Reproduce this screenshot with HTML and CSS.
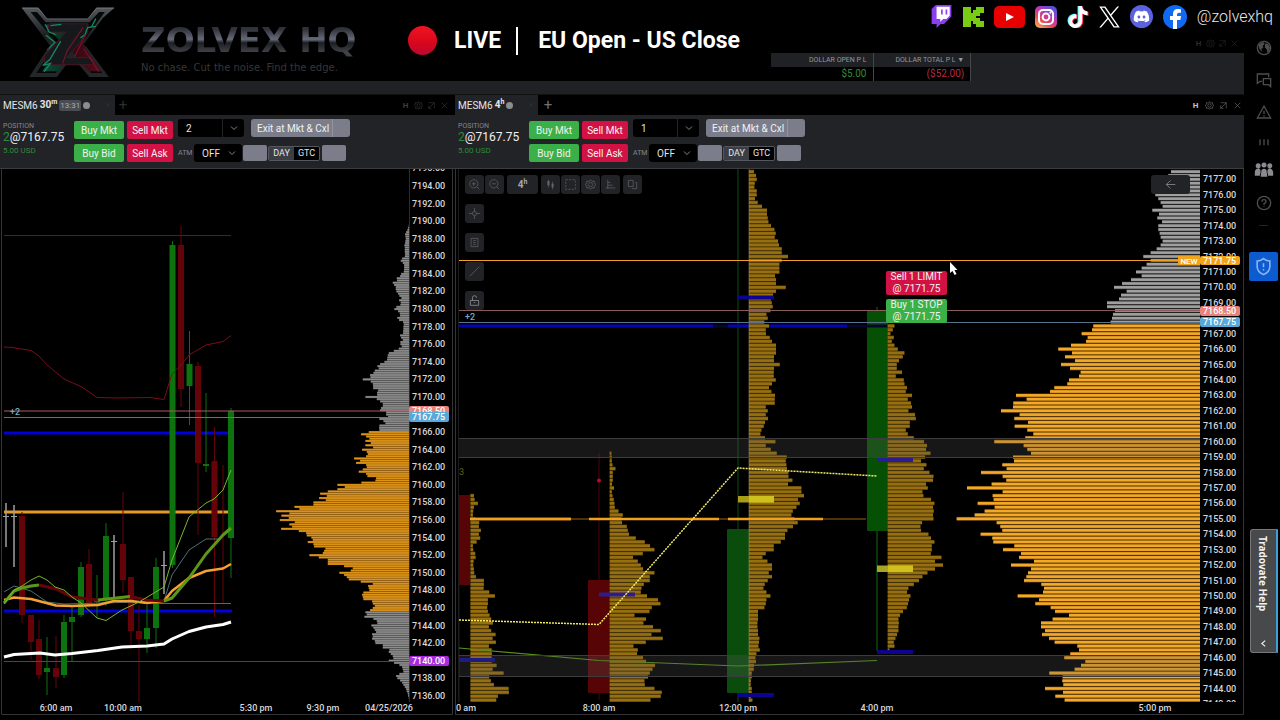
FILE: index.html
```html
<!DOCTYPE html>
<html lang="en">
  <head>
    <meta charset="utf-8" />
    <meta name="viewport" content="width=device-width, initial-scale=1" />
    <title>Zolvex HQ - Live</title>
    <link rel="stylesheet" href="styles.css">
    <script src="charts.js" defer></script>
  </head>

  <body>
    <!-- Shared icons -->
    <svg class="icon-defs" aria-hidden="true">
      <symbol id="gear" viewBox="0 0 16 16">
        <path d="M8 1l2 2.500 3.200-.6.300 3.200L16 8l-2.500 2-.3 3.200-3.200-.6L8 15l-2-2.400-3.200.6-.3-3.200L0 8l2.500-1.900.3-3.200 3.200.6z" />
        <circle cx="8" cy="8" r="3" />
      </symbol>
      <symbol id="popout" viewBox="0 0 16 16">
        <path d="M3 3h10v10M13 3 3 13M3 8v5h5" />
      </symbol>
      <symbol id="close" viewBox="0 0 16 16">
        <path d="M3 3l10 10M13 3 3 13" />
      </symbol>
      <symbol id="chevron" viewBox="0 0 16 16">
        <path d="M2 5l6 6 6-6" />
      </symbol>
    </svg>

    <div class="app">
      <main class="main">
        <header class="top">
          <div class="banner">
            <svg class="logo" viewBox="0 0 300 225" aria-hidden="true">
              <defs>
                <linearGradient id="steel" x1="0" y1="0" x2="0" y2="1">
                  <stop offset="0" stop-color="#55585b" />
                  <stop offset="0.4" stop-color="#1c2022" />
                  <stop offset="1" stop-color="#25282a" />
                </linearGradient>
                <linearGradient id="glow" x1="0" y1="0" x2="1" y2="0">
                  <stop offset="0" stop-color="#0b4f38" />
                  <stop offset="0.45" stop-color="#0a2a20" />
                  <stop offset="0.55" stop-color="#330912" />
                  <stop offset="1" stop-color="#5c0a1c" />
                </linearGradient>
                <linearGradient id="edge" x1="0" y1="0" x2="0" y2="1">
                  <stop offset="0" stop-color="#74787c" />
                  <stop offset="0.5" stop-color="#33373a" />
                  <stop offset="1" stop-color="#1c1f21" />
                </linearGradient>
              </defs>
              <path fill="url(#steel)" d="M2 4h52l27 34h128l27-34h56l-36 32-60 82 78 102h-60l-54-62-48 62H26l66-96z" />
              <path fill="#050808" d="M30 17h20l27 32h137l30-32h18l-74 100 66 91h-34l-62-70-50 70H48l62-95z" />
              <path fill="url(#glow)" d="M72 56h140l-26 42 8 20 56 84h-38l-52-60-44 60H66l62-88z" />
              <path fill="#15191b" stroke="#4b1622" stroke-width="3" d="M88 54h121v28l-66 78h72v-4l14 26H74v-28l66-74H82z" />
              <path fill="none" stroke="#168a60" stroke-width="4" d="M76 56l12 24 20 8M92 60l34-4M78 90l28 22-24 24M124 108l-34 58-22 18 24-6-20 26M234 62l-26 4-8 22-14 10M234 38l-14 26" />
              <path fill="none" stroke="#70142a" stroke-width="4" d="M194 66l-52 76M202 88l-34 68M216 158l22 40M146 134l-16 44M196 132l48 72" />
              <path fill="none" stroke="url(#edge)" stroke-width="3" d="M4 5h50l27 34h128l27-34h54M28 218l60-90M272 218l-70-92" />
            </svg>
            <div class="brand">
              <h1 class="brand-name">ZOLVEX HQ</h1>
              <p class="tagline">No chase. Cut the noise. Find the edge.</p>
            </div>
            <div class="live">
              <span class="live-dot"></span>
              <span>LIVE</span>
              <span class="live-title">EU Open - US Close</span>
            </div>
          </div>

          <div class="account">
            <div class="win-tools faint">
              <button type="button" aria-label="Hotkeys">H</button>
              <button type="button" aria-label="Settings"><svg><use href="#gear" /></svg></button>
              <button type="button" aria-label="Pop out"><svg><use href="#popout" /></svg></button>
              <button type="button" aria-label="Close"><svg><use href="#close" /></svg></button>
            </div>
            <table class="pl">
              <thead>
                <tr><th>DOLLAR OPEN P L</th><th>DOLLAR TOTAL P L ▼</th></tr>
              </thead>
              <tbody>
                <tr><td class="gain">$5.00</td><td class="loss">($52.00)</td></tr>
              </tbody>
            </table>
          </div>
        </header>

        <div class="panels">
          <section class="panel">
            <div class="tabs">
              <div class="tab">MESM6 <b>30<sup>m</sup></b> <span class="timer">13:31</span><i class="dot"></i>
                <button class="tab-close" type="button" aria-label="Close tab"><svg><use href="#close" /></svg></button>
              </div>
              <button class="add dim" type="button" aria-label="Add tab">+</button>
              <div class="win-tools dim">
                <button type="button" aria-label="Hotkeys">H</button>
                <button type="button" aria-label="Settings"><svg><use href="#gear" /></svg></button>
                <button type="button" aria-label="Pop out"><svg><use href="#popout" /></svg></button>
                <button type="button" aria-label="Close"><svg><use href="#close" /></svg></button>
              </div>
            </div>

            <form class="order-bar">
              <div class="position">
                <span class="caption">POSITION</span>
                <span class="price"><span class="gain">2</span>@7167.75</span>
                <span class="usd">5.00 USD</span>
              </div>
              <div class="trade">
                <button class="buy" type="button">Buy Mkt</button>
                <button class="sell" type="button">Sell Mkt</button>
                <button class="buy" type="button">Buy Bid</button>
                <button class="sell" type="button">Sell Ask</button>
              </div>
              <div class="options">
                <div class="row">
                  <span class="pick qty">
                    <select aria-label="Quantity"><option>2</option></select>
                    <svg><use href="#chevron" /></svg>
                  </span>
                  <button class="exit" type="button">Exit at Mkt &amp; Cxl</button>
                </div>
                <div class="row second">
                  <label class="atm" for="atm1">ATM</label>
                  <span class="pick off">
                    <select id="atm1"><option>OFF</option></select>
                    <svg><use href="#chevron" /></svg>
                  </span>
                  <button class="blank" type="button" aria-label="Order preset"></button>
                  <span class="tif">
                    <label><input type="radio" name="tif1" checked /><span>DAY</span></label>
                    <label><input type="radio" name="tif1" /><span>GTC</span></label>
                  </span>
                  <button class="blank" type="button" aria-label="Order options"></button>
                </div>
              </div>
            </form>

            <div class="chart">
              <svg id="chart30m" class="plot" viewBox="0 169 455 546" role="img" aria-label="MESM6 30 minute chart"></svg>
            </div>
          </section>

          <section class="panel">
            <div class="tabs">
              <div class="tab narrow">MESM6 <b>4<sup>h</sup></b> <i class="dot"></i>
                <button class="tab-close" type="button" aria-label="Close tab"><svg><use href="#close" /></svg></button>
              </div>
              <button class="add" type="button" aria-label="Add tab">+</button>
              <div class="win-tools">
                <button class="hot" type="button" aria-label="Hotkeys">H</button>
                <button type="button" aria-label="Settings"><svg><use href="#gear" /></svg></button>
                <button type="button" aria-label="Pop out"><svg><use href="#popout" /></svg></button>
                <button type="button" aria-label="Close"><svg><use href="#close" /></svg></button>
              </div>
            </div>

            <form class="order-bar">
              <div class="position">
                <span class="caption">POSITION</span>
                <span class="price"><span class="gain">2</span>@7167.75</span>
                <span class="usd">5.00 USD</span>
              </div>
              <div class="trade">
                <button class="buy" type="button">Buy Mkt</button>
                <button class="sell" type="button">Sell Mkt</button>
                <button class="buy" type="button">Buy Bid</button>
                <button class="sell" type="button">Sell Ask</button>
              </div>
              <div class="options">
                <div class="row">
                  <span class="pick qty">
                    <select aria-label="Quantity"><option>1</option></select>
                    <svg><use href="#chevron" /></svg>
                  </span>
                  <button class="exit" type="button">Exit at Mkt &amp; Cxl</button>
                </div>
                <div class="row second">
                  <label class="atm" for="atm2">ATM</label>
                  <span class="pick off">
                    <select id="atm2"><option>OFF</option></select>
                    <svg><use href="#chevron" /></svg>
                  </span>
                  <button class="blank" type="button" aria-label="Order preset"></button>
                  <span class="tif">
                    <label><input type="radio" name="tif2" checked /><span>DAY</span></label>
                    <label><input type="radio" name="tif2" /><span>GTC</span></label>
                  </span>
                  <button class="blank" type="button" aria-label="Order options"></button>
                </div>
              </div>
            </form>

            <div class="chart">
              <svg id="chart4h" class="plot" viewBox="455 169 789 546" role="img" aria-label="MESM6 4 hour chart"></svg>

              <div class="chart-tools">
                <div class="group">
                  <button type="button" aria-label="Zoom in"><svg viewBox="0 0 16 16"><circle cx="7" cy="7" r="6" /><path d="M11 11l4 4M4 7h6M7 4v6" /></svg></button>
                  <button type="button" aria-label="Zoom out"><svg viewBox="0 0 16 16"><circle cx="7" cy="7" r="6" /><path d="M11 11l4 4M4 7h6" /></svg></button>
                </div>
                <div class="group">
                  <button class="period" type="button">4<sup>h</sup></button>
                </div>
                <div class="group">
                  <button type="button" aria-label="Chart type"><svg viewBox="0 0 16 16"><path d="M5 1v11M11 4v11" /><path stroke-width="3" d="M5 3v6M11 7v5" /></svg></button>
                  <button type="button" aria-label="Select area"><svg viewBox="0 0 16 16"><rect x="1" y="1" width="14" height="14" stroke-dasharray="3 2" /></svg></button>
                  <button type="button" aria-label="Indicators"><svg><use href="#gear" /></svg></button>
                  <button type="button" aria-label="Profile"><svg viewBox="0 0 16 16"><path d="M4 1v13M1 13h14M4 5h4M4 9h7" /></svg></button>
                </div>
                <div class="group">
                  <button type="button" aria-label="Copy layout"><svg viewBox="0 0 16 16"><path d="M2 2h7v9H2zM12 5h2v9H7" /></svg></button>
                </div>
              </div>

              <div class="draw-tools">
                <button type="button" aria-label="Crosshair"><svg viewBox="0 0 16 16"><circle cx="8" cy="8" r="3" /><path d="M8 0v5M8 11v5M0 8h5M11 8h5" /></svg></button>
                <button type="button" aria-label="Notes"><svg viewBox="0 0 16 16"><path d="M3 2h10v12H3zM6 5h4M6 8h4M6 11h4" /></svg></button>
                <button type="button" aria-label="Trend line"><svg viewBox="0 0 16 16"><path d="M1 15 15 1" /></svg></button>
                <button class="lock" type="button" aria-label="Unlock"><svg viewBox="0 0 16 16"><path d="M2 8h12v7H2zM5 8V4q0-3 3-3t3 3M7 11h2" /></svg></button>
              </div>

              <button class="back" type="button" aria-label="Back"><svg viewBox="0 0 16 16"><path d="M15 8H2M8 2 2 8l6 6" /></svg></button>

              <div class="orders">
                <button class="sell" type="button">Sell 1 LIMIT<br>@ 7171.75</button>
                <button class="buy" type="button">Buy 1 STOP<br>@ 7171.75</button>
              </div>
            </div>
          </section>
        </div>
      </main>

      <nav class="rail">
        <button type="button" aria-label="Web"><svg viewBox="0 0 24 24"><circle cx="12" cy="12" r="10" /><path class="fill" d="M5 6l6-3 2 3-3 3 1 3-3 1 1 5-4-5-1-4zM14 5l4 1 3 5-1 5-3 3-1-5-3-3z" /></svg></button>
        <button type="button" aria-label="Chat"><svg viewBox="0 0 24 24"><path d="M9 14H6l-4 3V3h17v5" /><path d="M11 10h11v12l-3-3h-8z" /></svg></button>
        <button type="button" aria-label="Alerts"><svg viewBox="0 0 24 24"><path d="M12 3 22 21H2zM12 10v5M12 17v2" /></svg></button>
        <button class="bars" type="button" aria-label="Columns"><svg viewBox="0 0 24 24"><path d="M6 8v9M12 8v9M18 8v9" /></svg></button>
        <button class="lit" type="button" aria-label="Community"><svg viewBox="0 0 24 24"><g class="fill"><circle cx="5" cy="7" r="3" /><circle cx="12" cy="6" r="3" /><circle cx="19" cy="7" r="3" /><path d="M1 19v-5q1-4 5-4 2 1 2 4l-1 5zM17 19l-1-5q0-3 2-4 4 0 5 4v5zM8 20l1-8q3-3 6 0l1 8z" /></g></svg></button>
        <button class="ask" type="button" aria-label="Help"><svg viewBox="0 0 24 24"><circle cx="12" cy="12" r="10" /><path d="M9 10q0-3 3-3t3 3q0 1-3 3v2M12 17v1" /></svg></button>
        <hr class="rule">
        <button class="shield" type="button" aria-label="Risk"><svg viewBox="0 0 24 24"><path d="M12 2q4 3 8 3v7q0 7-8 10-8-3-8-10V5q4 0 8-3zM12 8v5M12 15v2" /></svg></button>
        <button class="help" type="button"><span>Tradovate Help</span><svg viewBox="0 0 16 16"><path d="M11 3 5 8l6 5" /></svg></button>
      </nav>

      <!-- Stream overlay -->
      <div class="social">
        <a href="#" aria-label="Twitch"><svg viewBox="0 0 24 24" width="23" height="23"><path fill="#fff" d="M6 1h15v11l-4 4h-4l-3 3v-4H6z" /><path fill="#8b3df0" d="M11.571 4.714h1.715v5.143H11.57zm4.715 0H18v5.143h-1.714zM6 0L1.714 4.286v15.428h5.143V24l4.286-4.286h3.428L22.286 12V0zm14.571 11.143l-3.428 3.428h-3.429l-3 3v-3H6.857V1.714h13.714Z" /></svg></a>
        <a href="#" aria-label="Kick"><svg viewBox="0 0 21 22" width="21" height="22"><g fill="#78cc14"><rect x="0" y="1" width="8" height="20" /><rect x="7" y="7" width="6" height="8" /><rect x="10" y="4" width="7" height="6" /><rect x="13" y="1" width="8" height="6" /><rect x="10" y="12" width="7" height="6" /><rect x="13" y="15" width="8" height="6" /></g></svg></a>
        <a href="#" aria-label="YouTube"><svg viewBox="0 0 31 22" width="31" height="22"><rect width="31" height="22" rx="5" fill="#e60000" /><path fill="#fff" d="M12 7v8l8-4z" /></svg></a>
        <a href="#" aria-label="Instagram"><svg viewBox="0 0 22 22" width="22" height="22"><defs><linearGradient id="insta" x1="0" y1="1" x2="0.7" y2="0"><stop offset="0" stop-color="#ffc24a" /><stop offset="0.4" stop-color="#e8455b" /><stop offset="0.7" stop-color="#b23ac0" /><stop offset="1" stop-color="#5550d6" /></linearGradient></defs><rect width="22" height="22" rx="5" fill="url(#insta)" /><g fill="none" stroke="#fff" stroke-width="2"><rect x="4" y="4" width="14" height="14" rx="4" /><circle cx="11" cy="11" r="3.4" /></g><circle cx="15.4" cy="6.6" r="1.1" fill="#fff" /></svg></a>
        <a href="#" aria-label="TikTok"><svg viewBox="0 0 24 24" width="22" height="22"><defs><path id="note" d="M12.525.02c1.31-.02 2.61-.01 3.91-.02.08 1.53.63 3.09 1.75 4.17 1.12 1.11 2.7 1.62 4.24 1.79v4.03c-1.44-.05-2.89-.35-4.2-.97-.57-.26-1.1-.59-1.62-.93-.01 2.92.01 5.84-.02 8.75-.08 1.4-.54 2.79-1.35 3.94-1.31 1.92-3.58 3.17-5.91 3.21-1.43.08-2.86-.31-4.08-1.03-2.02-1.19-3.44-3.37-3.65-5.71-.02-.5-.03-1-.01-1.49.18-1.9 1.12-3.72 2.58-4.96 1.66-1.44 3.98-2.13 6.15-1.72.02 1.48-.04 2.96-.04 4.44-.99-.32-2.15-.23-3.02.37-.63.41-1.11 1.04-1.36 1.75-.21.51-.15 1.07-.14 1.61.24 1.64 1.82 3.02 3.5 2.87 1.12-.01 2.19-.66 2.77-1.61.19-.33.4-.67.41-1.06.1-1.79.06-3.57.07-5.36.01-4.03-.01-8.05.02-12.07z" /></defs><use href="#note" x="-1" y="-0.6" fill="#25f4ee" /><use href="#note" x="1" y="0.6" fill="#fe2c55" /><use href="#note" fill="#fff" /></svg></a>
        <a href="#" aria-label="X"><svg viewBox="0 0 24 24" width="21" height="22"><path fill="#fff" d="M14.234 10.162 22.977 0h-2.072l-7.591 8.824L7.251 0H.258l9.168 13.343L.258 24H2.33l8.016-9.318L16.749 24h6.993zm-2.837 3.299-.929-1.329L3.076 1.56h3.182l5.965 8.532.929 1.329 7.754 11.09h-3.182z" /></svg></a>
        <a href="#" aria-label="Discord"><svg viewBox="0 0 40 40" width="23" height="23"><circle cx="20" cy="20" r="20" fill="#5b62e0" /><path fill="#fff" transform="translate(6.500 6.500) scale(1.120)" d="M20.317 4.37a19.79 19.79 0 0 0-4.885-1.515.074.074 0 0 0-.079.037c-.21.375-.444.865-.608 1.25a18.27 18.27 0 0 0-5.487 0 12.64 12.64 0 0 0-.617-1.25.077.077 0 0 0-.079-.037A19.74 19.74 0 0 0 3.677 4.37a.07.07 0 0 0-.032.027C.533 9.046-.32 13.58.099 18.057a.082.082 0 0 0 .031.057 19.9 19.9 0 0 0 5.993 3.03.078.078 0 0 0 .084-.028 14.09 14.09 0 0 0 1.226-1.994.076.076 0 0 0-.041-.106 13.1 13.1 0 0 1-1.872-.892.077.077 0 0 1-.008-.128c.126-.094.252-.192.372-.292a.074.074 0 0 1 .077-.01c3.928 1.793 8.18 1.793 12.062 0a.074.074 0 0 1 .078.01c.12.098.246.198.373.292a.077.077 0 0 1-.006.127 12.3 12.3 0 0 1-1.873.892.077.077 0 0 0-.041.107c.36.698.772 1.362 1.225 1.993a.076.076 0 0 0 .084.028 19.84 19.84 0 0 0 6.002-3.03.077.077 0 0 0 .032-.054c.5-5.177-.838-9.674-3.549-13.66a.061.061 0 0 0-.031-.03zM8.02 15.33c-1.183 0-2.157-1.085-2.157-2.419 0-1.333.956-2.419 2.157-2.419 1.21 0 2.176 1.096 2.157 2.42 0 1.333-.956 2.418-2.157 2.418zm7.975 0c-1.183 0-2.157-1.085-2.157-2.419 0-1.333.955-2.419 2.157-2.419 1.21 0 2.176 1.096 2.157 2.42 0 1.333-.946 2.418-2.157 2.418z" /></svg></a>
        <a href="#" aria-label="Facebook"><svg viewBox="0 0 24 24" width="24" height="24"><circle cx="12" cy="12" r="12" fill="#1069f2" /><path fill="#fff" d="M10 24v-9H7v-4h3V9q0-5 5-5l3 .3v3.400h-2q-2 0-2 2V11h4l-.6 4H14v9z" /></svg></a>
        <span class="handle">@zolvexhq</span>
      </div>
    </div>
  </body>
</html>
```

FILE: styles.css
```css
* {
  box-sizing: border-box;
}

body {
  margin: 0;
  background-color: #000;
  color: #e4e4e6;
  font-family: Roboto, "Liberation Sans", sans-serif;
  font-size: 10px;
}

button,
select {
  margin: 0;
  padding: 0;
  border: 0;
  background: none;
  color: inherit;
  font: inherit;
  cursor: pointer;
}

svg {
  display: block;
  fill: none;
  stroke: currentColor;
  stroke-width: 1;
}

.icon-defs {
  position: absolute;
  width: 0;
  height: 0;
}

.app {
  position: relative;
  display: flex;
  min-height: 100vh;
}

.main {
  flex: 1;
  min-width: 0;
}

/* Top area */
.top {
  display: flex;
  padding-bottom: 13px;
  background-color: #202125;
}

.banner {
  display: flex;
  flex: 0 0 62%;
  align-items: center;
  height: 81px;
  background-color: #000;
}

.logo {
  width: 96px;
  height: 73px;
  margin: 4px 24px 0 21px;
  stroke: none;
}

.brand {
  width: 267px;
  padding-top: 16px;
}

.brand-name {
  margin: 0;
  background-image: linear-gradient(#30323a 20%, #666a78 48%, #1c1e22 58%, #404248 84%);
  background-clip: text;
  -webkit-background-clip: text;
  color: transparent;
  font: bold 34px/36px "DejaVu Sans", sans-serif;
}

.tagline {
  margin: 2px 0 0;
  color: #36373a;
  font: 10px/15px "DejaVu Sans", sans-serif;
}

.live {
  display: flex;
  align-items: center;
  color: #fff;
  font-size: 23px;
  font-weight: 700;
  line-height: 28px;
}

.live-dot {
  width: 29px;
  height: 29px;
  margin-right: 17px;
  border-radius: 50%;
  background-image: linear-gradient(#f01422, #d8061c 60%, #b80832);
}

.live-title {
  margin-left: 15px;
  padding-left: 20px;
  border-left: 2px solid #fff;
}

.account {
  flex: 1;
}

.account .win-tools {
  height: 53px;
  padding-top: 33px;
  background-color: #000;
}

.pl {
  width: 200px;
  border-collapse: collapse;
  text-align: right;
}

.pl th,
.pl td {
  width: 51%;
  height: 14px;
  padding: 0 6px;
  border-right: 1px solid #45464a;
  line-height: 14px;
}

.pl th:first-child {
  width: 49%;
}

.pl th {
  color: #97989c;
  font-size: 7px;
  font-weight: 400;
}

.pl td {
  background-color: #000;
}

.gain {
  color: #2f8a3c;
}

.loss {
  color: #b02c40;
}

.win-tools {
  display: flex;
  justify-content: flex-end;
  align-items: center;
  gap: 5px;
  margin-left: auto;
  padding-right: 2px;
  color: #77787c;
}

.win-tools button {
  width: 9px;
  height: 9px;
  font-size: 8px;
  font-weight: 700;
  line-height: 9px;
}

.win-tools svg {
  width: 9px;
  height: 9px;
}

.win-tools .hot {
  color: #c4c4c8;
}

.win-tools.dim {
  padding-right: 6px;
  gap: 4px;
  color: #3c3d40;
}

.win-tools.faint {
  gap: 3px;
  padding-right: 5px;
  color: #29292c;
}

/* Chart panels */
.panels {
  display: grid;
  grid-template-columns: 455fr 789fr;
}

.panel {
  min-width: 0;
  border-top: 1px solid #111;
}

.tabs {
  display: flex;
  height: 20px;
}

.tab {
  display: flex;
  align-items: center;
  gap: 2px;
  width: 115px;
  padding: 0 4px 0 3px;
  background-color: #222327;
}

.tab.narrow {
  width: 83px;
}

.tab sup {
  font-size: 7px;
  line-height: 7px;
}

.timer {
  padding: 0 1px;
  border-radius: 2px;
  background-color: #4a4c54;
  color: #a8aab2;
  font-size: 8px;
  line-height: 11px;
}

.dot {
  width: 7px;
  height: 7px;
  border-radius: 50%;
  background-color: #8c8d90;
}

.tab-close {
  margin-left: auto;
  color: #3c3d42;
}

.tab-close svg {
  width: 6px;
  height: 6px;
}

.add {
  width: 20px;
  color: #707176;
  font-size: 15px;
  line-height: 20px;
}

.add.dim {
  width: 16px;
  color: #2c2d30;
}

.order-bar {
  display: flex;
  height: 54px;
  padding: 4px 3px;
  border-bottom: 1px solid #3c3d40;
  background-color: #222327;
}

.position {
  display: flex;
  flex-direction: column;
  width: 71px;
  padding-top: 3px;
}

.caption {
  color: #85868c;
  font-size: 7px;
  line-height: 8px;
}

.price {
  color: #f0f0f2;
  font-size: 12px;
  line-height: 15px;
}

.usd {
  color: #2f8a3c;
  font-size: 8px;
  line-height: 12px;
}

.trade {
  display: grid;
  grid-template-columns: 50px 46px;
  grid-auto-rows: 18px;
  gap: 5px 3px;
  width: 104px;
  padding-top: 2px;
}

.buy,
.sell {
  border-radius: 2px;
  color: #f2f2f2;
}

.buy {
  background-color: #3cb048;
}

.sell {
  background-color: #d21245;
}

.row {
  display: flex;
  align-items: center;
  height: 18px;
}

.row.second {
  margin-top: 7px;
}

.pick {
  position: relative;
  height: 18px;
  border-radius: 3px;
  background-color: #000;
}

.pick select {
  width: 100%;
  height: 18px;
  padding-left: 8px;
  appearance: none;
}

.pick svg {
  position: absolute;
  top: 5px;
  right: 6px;
  width: 8px;
  height: 8px;
  color: #85868a;
  stroke-width: 2;
  pointer-events: none;
}

.qty {
  width: 66px;
  margin-right: 7px;
}

.qty::after {
  content: "";
  position: absolute;
  top: 0;
  right: 21px;
  height: 18px;
  border-left: 1px solid #222327;
}

.off {
  width: 48px;
  margin-right: 1px;
}

.exit {
  width: 99px;
  height: 18px;
  padding-left: 6px;
  border-radius: 3px;
  background-image: linear-gradient(90deg, #7b7e8a 81px, #92949e 81px, #92949e 82px, #7b7e8a 82px);
  color: #f0f0f2;
  text-align: left;
}

.atm {
  width: 16px;
  color: #85868c;
  font-size: 7px;
}

.blank {
  width: 24px;
  height: 16px;
  border-radius: 2px;
  background-color: #7b7e8a;
}

.tif {
  display: flex;
  width: 52px;
  height: 15px;
  margin: 0 2px 0 1px;
  border: 1px solid #55575e;
  border-radius: 2px;
  background-color: #000;
  font-size: 9px;
  line-height: 13px;
}

.tif label {
  position: relative;
  flex: 1;
  text-align: center;
}

.tif input {
  position: absolute;
  opacity: 0;
}

.tif span {
  display: block;
}

.tif input:checked + span {
  background-color: #3c3e45;
}

.chart {
  position: relative;
}

.plot {
  width: 100%;
  height: auto;
  stroke: none;
}

.plot text {
  fill: #d8d8da;
  font-size: 9px;
  font-weight: 500;
}

.plot .qty-mark {
  fill: #6cb0c8;
}

.plot .tag {
  fill: #fff;
}

.plot .hint {
  fill: #4d4d10;
}

/* Tools that float over the 4 hour chart */
.chart-tools {
  position: absolute;
  top: 6px;
  left: 10px;
  display: flex;
  gap: 3px;
}

.group {
  display: flex;
  gap: 1px;
}

.chart-tools button,
.draw-tools button,
.back {
  display: flex;
  justify-content: center;
  align-items: center;
  width: 19px;
  height: 19px;
  border-radius: 3px;
  background-color: #222327;
  color: #65666b;
}

.chart-tools .period {
  width: 31px;
  color: #a5a6aa;
  font-weight: 700;
}

.period sup {
  margin-bottom: 4px;
  font-size: 7px;
  line-height: 7px;
}

.chart-tools svg,
.draw-tools svg,
.back svg {
  width: 11px;
  height: 11px;
}

.draw-tools {
  position: absolute;
  top: 35px;
  left: 10px;
  display: grid;
  gap: 10px;
}

.draw-tools .lock {
  color: #a0a1a5;
}

.chart .back {
  position: absolute;
  top: 6px;
  right: 54px;
  width: 39px;
  color: #a0a1a5;
}

.orders {
  position: absolute;
  top: 102px;
  left: 431px;
  display: grid;
  gap: 4px;
}

.orders button {
  width: 61px;
  height: 24px;
  line-height: 12px;
}

/* Right rail */
.rail {
  display: flex;
  flex-direction: column;
  align-items: center;
  width: 36px;
  padding: 40px 0 0 3px;
  color: #4c4d50;
}

.rail button {
  height: 16px;
  margin-bottom: 16px;
}

.rail svg {
  width: 16px;
  height: 16px;
  stroke-width: 2;
}

.rail .fill {
  fill: currentColor;
  stroke: none;
}

.rail .bars {
  margin: -2px 0 15px;
}

.rail .lit {
  height: 20px;
  margin: -5px 0 15px;
  color: #8a8b8e;
}

.rail .lit svg {
  width: 20px;
  height: 20px;
}

.rail .ask {
  margin-bottom: 14px;
}

.rule {
  width: 9px;
  margin: 0 0 26px;
  border: 0;
  border-top: 1px solid #222;
}

.rail .shield {
  display: flex;
  justify-content: center;
  align-items: center;
  width: 29px;
  height: 29px;
  margin: 0;
  border-radius: 2px;
  background-color: #0c5bd0;
  color: #8fb6f0;
}

.shield svg {
  width: 19px;
  height: 19px;
}

.rail .help {
  display: flex;
  justify-content: space-between;
  align-items: center;
  width: 28px;
  height: 124px;
  margin-top: 248px;
  padding: 6px 0 4px;
  border: 1px solid #77787a;
  border-right: 2px solid #3c9fd8;
  border-radius: 3px 0 0 3px;
  background-color: #48494b;
  color: #f2f2f2;
  font: bold 10px/14px "Noto Sans", sans-serif;
  writing-mode: vertical-rl;
}

.help svg {
  width: 9px;
  height: 9px;
}

/* Social links */
.social {
  position: absolute;
  top: 4px;
  right: 7px;
  display: flex;
  align-items: center;
  gap: 10px;
  height: 25px;
}

.social svg {
  stroke: none;
}

.handle {
  color: #e8e8e8;
  font-size: 16px;
  font-weight: 300;
}
```

FILE: charts.js
```javascript
var SVG_NS = "http://www.w3.org/2000/svg";

function add(parent, name, attrs, text) {
  var node = document.createElementNS(SVG_NS, name);
  for (var key in attrs) {
    node.setAttribute(key, attrs[key]);
  }
  if (text) {
    node.textContent = text;
  }
  parent.appendChild(node);
  return node;
}

function line(svg, x1, y1, x2, y2, color, width) {
  return add(svg, "line", { x1: x1, y1: y1, x2: x2, y2: y2, stroke: color, "stroke-width": width || 1 });
}

function path(svg, points, color, width, dash) {
  return add(svg, "polyline", {
    points: points, fill: "none", stroke: color, "stroke-width": width || 1,
    "stroke-linejoin": "round", "stroke-dasharray": dash || "none"
  });
}

function box(svg, x, y, w, h, color, radius) {
  return add(svg, "rect", { x: x, y: y, width: w, height: h, fill: color, rx: radius || 0 });
}

function label(svg, x, y, text, anchor, cls) {
  return add(svg, "text", { x: x, y: y + 3, "text-anchor": anchor || "start", "class": cls || "" }, text);
}

// One bar for each quarter point, from the top price down. side is 1 (grows right) or -1 (grows left)
function profile(svg, x, top, step, volumes, side, bright, dark) {
  for (var i = 0; i < volumes.length; i++) {
    var w = volumes[i] / 3;
    var left = side > 0 ? x : x - w;
    var y = top + i * step - step / 2;
    box(svg, left, y, w, step, dark);
    box(svg, left, y + step * 0.15, w, step * 0.68, bright);
  }
}

// [x, high, low, body top, body bottom, kind]
var candles = [
  [6, 503, 547, 516, 517, "n"], [14, 505, 567, 516, 517, "n"],
  [22, 512, 623, 516, 615, "d"], [31, 615, 660, 615, 642, "d"],
  [39, 620, 679, 639, 675, "d"], [47, 637, 695, 668, 672, "u"],
  [56, 636, 688, 668, 677, "d"], [64, 615, 678, 622, 675, "u"],
  [72, 607, 661, 617, 622, "u"], [81, 562, 617, 567, 615, "u"],
  [89, 549, 608, 564, 604, "d"], [97, 575, 618, 600, 602, "u"],
  [106, 523, 606, 536, 600, "u"], [114, 535, 597, 541, 542, "n"],
  [123, 492, 593, 544, 580, "d"], [131, 577, 645, 577, 631, "d"],
  [139, 605, 702, 631, 639, "d"], [147, 605, 653, 628, 639, "u"],
  [156, 558, 648, 567, 628, "u"], [164, 551, 594, 565, 566, "n"],
  [172.5, 241, 568, 245, 565, "u"], [181, 226, 407, 245, 389, "d"],
  [189.5, 331, 425, 364, 386, "u"], [198, 362, 535, 366, 463, "d"],
  [206, 393, 472, 464, 466, "u"], [214.5, 427, 617, 461, 537, "d"],
  [223, 465, 603, 465, 465, "d"], [231, 408, 578, 411, 538, "u"]
];

var colors = { u: "#0c730f", d: "#640408", n: "#a0a0a0" };

var greyTop30 = [2, 4, 6, 10, 13, 12, 11, 12, 13, 15, 14, 14, 14, 13, 14, 22, 26, 20, 16, 16, 16, 17, 25, 28, 38, 37, 50, 46, 41, 41, 39, 34, 30, 24, 31, 26, 27, 39, 45, 34, 29, 28, 36, 31, 19, 17, 18, 18, 19, 19, 28, 25, 20, 27, 27, 23, 32, 47, 62, 65, 66, 67, 75, 88, 96, 92, 104, 108, 118, 117, 140, 116, 110, 109, 109, 94, 97, 97, 132, 98, 88, 80, 80, 85, 88, 70, 70, 64, 90, 78, 72, 90, 91, 90];
var value30 = [122, 145, 130, 120, 132, 116, 132, 109, 142, 128, 125, 130, 166, 148, 160, 130, 128, 140, 152, 130, 126, 100, 102, 144, 216, 194, 216, 245, 268, 248, 271, 251, 288, 288, 345, 330, 400, 360, 384, 362, 389, 344, 360, 352, 385, 332, 310, 308, 294, 290, 305, 288, 286, 252, 256, 260, 300, 272, 245, 245, 245, 196, 170, 176, 210, 196, 188, 182, 146, 110, 124, 122, 120, 138, 142, 140, 138, 112, 110, 104, 110, 118];
var greyLow30 = [132, 128, 135, 108, 98, 96, 114, 108, 104, 100, 112, 110, 112, 104, 102, 80, 80, 60, 62, 56, 50, 48, 62, 46, 30, 22, 20, 18, 30, 40, 36, 28, 22, 18, 14, 10, 8, 5, 4, 2];

var grey4h = [87, 95, 110, 115, 120, 125, 134, 125, 118, 112, 143, 123, 128, 114, 125, 125, 121, 118, 112, 118, 130, 148, 170, 148, 160, 175, 192, 175, 207, 234, 258, 220, 237, 243, 279, 279, 255, 261, 264, 268];
var value4h = [320, 324, 355, 337, 342, 387, 425, 384, 405, 375, 417, 390, 358, 363, 393, 398, 437, 450, 552, 520, 560, 561, 597, 541, 557, 516, 556, 518, 500, 524, 617, 529, 518, 507, 561, 558, 593, 580, 657, 592, 581, 625, 699, 592, 622, 619, 667, 616, 646, 676, 730, 610, 599, 593, 658, 623, 620, 557, 591, 537, 543, 498, 567, 507, 516, 521, 528, 476, 468, 471, 547, 483, 494, 448, 435, 393, 442, 477, 477, 465, 474, 453, 436, 368, 363, 389, 407, 344, 357, 376, 452, 412, 413, 410, 465, 411, 434, 406];

var at4am = [10, 12, 22, 10, 8, 7, 14, 26, 25, 31, 25, 29, 18, 7, 8, 14, 15, 9, 8, 10, 11, 16, 40, 40, 39, 56, 73, 52, 52, 50, 52, 57, 62, 67, 55, 62, 75, 66, 76, 55, 63, 64, 63, 63, 78, 66, 99, 56, 61, 70, 114, 115, 82, 77];
var at8am = [5, 6, 6, 8, 17, 9, 9, 9, 7, 13, 6, 8, 12, 14, 15, 26, 39, 35, 37, 51, 54, 58, 78, 105, 121, 134, 99, 70, 84, 93, 100, 134, 120, 120, 102, 95, 93, 112, 145, 152, 126, 119, 74, 109, 101, 130, 153, 125, 159, 108, 71, 84, 82, 100, 109, 136, 128, 120, 115, 104, 105, 134, 156, 153, 122];
var at12pm = [15, 21, 23, 17, 16, 23, 23, 18, 26, 39, 54, 54, 56, 58, 66, 76, 80, 77, 87, 90, 98, 98, 117, 98, 91, 91, 91, 78, 81, 81, 110, 81, 72, 66, 68, 71, 64, 52, 56, 46, 60, 50, 51, 62, 69, 81, 81, 81, 75, 75, 92, 75, 74, 74, 80, 69, 60, 67, 78, 77, 77, 50, 56, 50, 57, 48, 44, 37, 34, 48, 79, 50, 65, 83, 113, 110, 112, 114, 118, 118, 130, 117, 157, 157, 165, 147, 152, 142, 131, 127, 136, 146, 132, 115, 108, 108, 95, 74, 74, 50, 40, 55, 69, 69, 59, 69, 56, 47, 43, 52, 64, 52, 50, 46, 27, 27, 27, 25, 25, 27, 27, 31, 30, 28, 32, 22, 19, 21, 15, 14, 8, 8, 6, 5, 8, 8, 6, 10];
var at4pm = [20, 15, 8, 18, 12, 20, 30, 50, 45, 34, 27, 27, 43, 24, 48, 50, 58, 54, 73, 60, 70, 73, 62, 82, 84, 66, 66, 54, 60, 78, 109, 118, 115, 128, 112, 100, 116, 108, 125, 137, 136, 115, 120, 104, 107, 130, 140, 136, 138, 136, 137, 103, 98, 100, 122, 130, 140, 132, 132, 129, 161, 142, 166, 142, 119, 104, 94, 78, 62, 58, 68, 64, 61, 57, 46, 37, 32, 33, 32, 32, 28, 23, 18, 20, 5];

function draw30m() {
  var svg = document.getElementById("chart30m");
  var step = 2.198;

  function y(price) {
    return 186 + (7194 - price) * 8.79;
  }

  line(svg, 4, 235.5, 231, 235.5, "#7c0c1c");
  line(svg, 4, 433, 229, 433, "#0000d8", 3);
  line(svg, 4, 611, 232, 611, "#0000d8", 3);
  line(svg, 4, 512, 229, 512, "#e69a26", 3);

  candles.forEach(function (c) {
    line(svg, c[0], c[1], c[0], c[2], colors[c[5]], c[5] === "n" ? 1.5 : 1);
    box(svg, c[0] - 3, c[3], 6, c[4] - c[3], colors[c[5]]);
  });

  path(svg, "4,347 12,347.5 31,350.5 39,356 47,365 64,379 82,387 97,397.5 118,398 150,397.5 164,399.5 172,374 182,364 189,355 206,345 223,341.5 231,335.5", "#7c0c1c");
  path(svg, "155,603.5 231,603.5", "#238078");
  path(svg, "4,592 14,586 31,591 47,602 64,604 140,602 164,601 172,575 189,550 206,539 218,539 225,533 231,528", "#4c7070");
  path(svg, "4,600 14,597.5 31,599 56,605.5 72,606 98,605 114,601 131,601 147,603 164,601 172,591 189,578 206,571 223,568.5 231,564", "#f5a032", 2.5);
  path(svg, "4,603 14,591 22,588 31,586 39,585", "#5c9818", 3);
  path(svg, "39,585 56,589 72,597 98,600", "#640408", 3);
  path(svg, "98,600 130,596.5", "#5c9818", 3);
  path(svg, "130,596.5 147,600 164,601", "#640408", 3);
  path(svg, "164,601 172,598 189,578 206,554 223,535 231,528", "#5c9818", 3);
  path(svg, "4,604 14,590 22,586 31,580 39,576 47,580 55,587 64,590 72,597 81,603 97,618 106,620.5 122,610 139,602 164,587 172,560 189,517 206,503 214,499 223,490 231,470", "#78b828");
  path(svg, "4,657 14,654.5 40,653 55,655 72,653.5 98,650.5 122,647 147,646 164,644 172,639 189,631.5 206,627 223,624.5 231,622", "#fff", 3);

  profile(svg, 409.5, y(7189.5), step, greyTop30, -1, "#8c8c8c", "#606060");
  profile(svg, 409.5, y(7166), step, value30, -1, "#dc9418", "#a86c18");
  profile(svg, 409.5, y(7145.5), step, greyLow30, -1, "#8c8c8c", "#606060");

  line(svg, 4, 411, 409, 411, "#a85c60");
  line(svg, 4, 417.5, 409, 417.5, "#478090");
  line(svg, 4, 661.5, 409, 661.5, "#6c2a8c");
  label(svg, 10, 412, "+2", "start", "qty-mark");

  // Price axis
  line(svg, 409.5, 169, 409.5, 702, "#2c2c2c");
  for (var p = 7196; p >= 7136; p -= 2) {
    if (p !== 7168 && p !== 7140) {
      label(svg, 412, y(p), p + ".00");
    }
  }
  box(svg, 409, 406, 40, 10, "#e8827c", 2);
  label(svg, 412, 410.5, "7168.50", "start", "tag");
  box(svg, 409, 412, 40, 10, "#58a8d8", 2);
  label(svg, 412, 417, "7167.75", "start", "tag");
  box(svg, 409, 656, 40, 10, "#a82cdc", 2);
  label(svg, 412, 661, "7140.00", "start", "tag");

  // Time axis
  label(svg, 56, 707.5, "6:00 am", "middle");
  label(svg, 123, 707.5, "10:00 am", "middle");
  label(svg, 256, 707.5, "5:30 pm", "middle");
  label(svg, 323, 707.5, "9:30 pm", "middle");
  label(svg, 389, 707.5, "04/25/2026", "middle");
  path(svg, "1.5,169 1.5,714.5 452.5,714.5 452.5,169", "#333438");
}

function draw4h() {
  var svg = document.getElementById("chart4h");
  var step = 3.857;
  var gold = "#966f10";
  var goldDark = "#5c420a";

  function y(price) {
    return 179.4 + (7177 - price) * 15.428;
  }

  var defs = add(svg, "defs", {});
  var clip = add(defs, "clipPath", { id: "plotArea" });
  box(clip, 458, 169, 786, 533);
  var plot = add(svg, "g", { "clip-path": "url(#plotArea)" });

  // Candles
  line(plot, 459, 585, 459, 702, "#5c0208");
  box(plot, 459, 495, 11, 90, "#560406");
  line(plot, 599, 453, 599, 700, "#4c0408");
  box(plot, 588, 580, 22, 113, "#560406", 1);
  add(plot, "circle", { cx: 599, cy: 480.5, r: 2, fill: "#b80c2c" });
  line(plot, 738, 169, 738, 702, "#0c4c14");
  box(plot, 727, 529, 22, 164, "#0a4c0c", 1);
  line(plot, 877, 307, 877, 651, "#0c6c14");
  box(plot, 867, 310, 21, 221, "#065006", 1);

  // Value lines
  line(plot, 458, 326, 888, 326, "#06062c", 3);
  line(plot, 458, 326, 713, 326, "#0404b0", 3);
  line(plot, 728, 326, 847, 326, "#0404b0", 3);
  line(plot, 470, 519, 866, 519, "#4c3206", 2);
  line(plot, 470, 519, 571, 519, "#f0a01c", 2.5);

  profile(plot, 470.5, y(7156.5), step, at4am, 1, gold, goldDark);
  profile(plot, 609.7, y(7159.25), step, at8am, 1, gold, goldDark);
  profile(plot, 749, y(7177.5), step, at12pm, 1, gold, goldDark);
  profile(plot, 887.7, y(7167.5), step, at4pm, 1, gold, goldDark);
  line(plot, 749, 169, 749, 702, "#b09060", 0.5);

  line(plot, 470, 519, 571, 519, "#f0a01c", 2.5);
  line(plot, 589, 519, 719, 519, "#f0a01c", 2.5);
  line(plot, 728, 519, 823, 519, "#f0a01c", 2.5);

  [[738, 297.5], [877, 460], [877, 652], [599, 594.5], [459, 660], [738, 695]].forEach(function (m) {
    line(plot, m[0], m[1], m[0] + 36, m[1], m[0] === 599 || m[1] === 460 ? "#2c1c90" : "#0c0490", 4);
  });
  box(plot, 738, 496, 36, 6.5, "#a89c18");
  box(plot, 749, 496, 25, 6.5, "#d0c01c");
  box(plot, 877, 565.5, 36, 6.5, "#a8a424");
  box(plot, 888, 565.5, 25, 6.5, "#d0c01c");

  path(plot, "459,648 599,660.5 738,666 877,660.5", "#569018", 1.2);
  path(plot, "459,620 599,624.5 738,468 877,476", "#f4ec60", 1.5, "2 1");

  profile(plot, 1200, y(7177.5), step, grey4h, -1, "#a0a0a0", "#303030");
  profile(plot, 1200, y(7167.5), step, value4h, -1, "#f2a828", "#714706");

  // Shaded zones
  box(plot, 458, 438.500, 742, 19, "rgba(90,90,90,0.25)");
  box(plot, 458, 655.500, 742, 21, "rgba(90,90,90,0.25)");
  [438.5, 457.5, 655.5, 676.5].forEach(function (v) {
    line(plot, 458, v, 1200, v, "#3c3c3e");
  });

  line(plot, 458, 260.5, 1200, 260.5, "#f0a024", 1.2);
  line(plot, 458, 310.5, 1200, 310.5, "#885c58");
  line(plot, 458, 322.5, 1200, 322.5, "#58748c");
  label(svg, 465, 317, "+2", "start", "qty-mark");
  label(svg, 459, 472, "3", "start", "hint");

  // Price axis
  for (var p = 7177; p >= 7143; p--) {
    if (p !== 7168) {
      label(plot, 1203, y(p), p + ".00");
    }
  }
  box(svg, 1178, 256, 22, 9, "#f0a41c");
  label(svg, 1189, 260.5, "NEW", "middle", "tag").style.fontSize = "8px";
  box(svg, 1200, 256, 40, 9, "#f0a41c", 2);
  label(svg, 1203, 260.5, "7171.75", "start", "tag");
  box(svg, 1200, 306, 40, 10, "#e8827c", 2);
  label(svg, 1203, 310.5, "7168.50", "start", "tag");
  box(svg, 1200, 317, 40, 10, "#58a8d8", 2);
  label(svg, 1203, 322, "7167.75", "start", "tag");

  // Time axis
  label(svg, 456, 707.5, "0 am");
  label(svg, 599, 707.5, "8:00 am", "middle");
  label(svg, 738, 707.5, "12:00 pm", "middle");
  label(svg, 877, 707.5, "4:00 pm", "middle");
  label(svg, 1155, 707.5, "5:00 pm", "middle");
  line(svg, 458.5, 169, 458.5, 702, "#1c1c1c");
  path(svg, "455.5,169 455.5,714.5 1243.5,714.5 1243.5,169", "#333438");

  // Pointer
  add(svg, "path", { d: "M950 262v11l2.500-2 2 4 2-1-2-4h3z", fill: "#fff" });
}

draw30m();
draw4h();
```
